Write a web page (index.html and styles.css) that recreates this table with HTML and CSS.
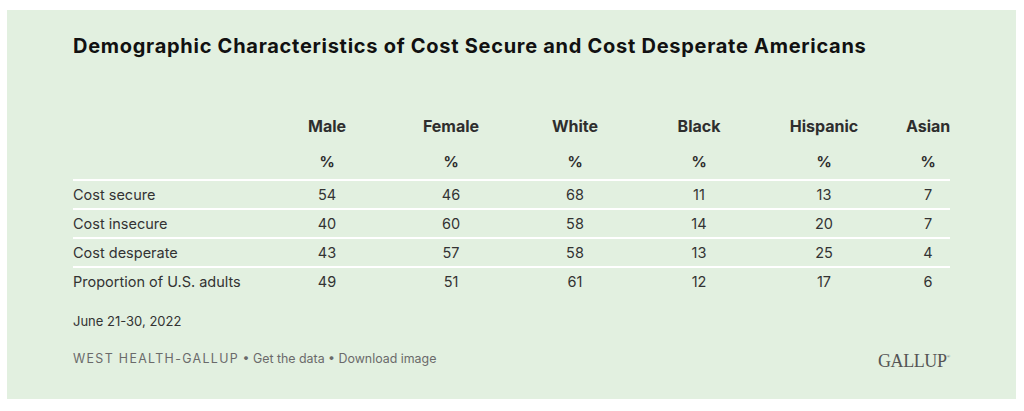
FILE: index.html
```html
<!DOCTYPE html>
<html lang="en">
<head>
<meta charset="utf-8">
<title>Demographic Characteristics of Cost Secure and Cost Desperate Americans</title>
<link rel="stylesheet" href="styles.css">
</head>
<body>
<section class="panel">
  <h1 class="title">Demographic Characteristics of Cost Secure and Cost Desperate Americans</h1>
  <div class="table">
    <div class="row head">
      <div class="cell label"></div>
      <div class="cell">Male</div>
      <div class="cell">Female</div>
      <div class="cell">White</div>
      <div class="cell">Black</div>
      <div class="cell">Hispanic</div>
      <div class="cell last">Asian</div>
    </div>
    <div class="row head units">
      <div class="cell label"></div>
      <div class="cell">%</div>
      <div class="cell">%</div>
      <div class="cell">%</div>
      <div class="cell">%</div>
      <div class="cell">%</div>
      <div class="cell last">%</div>
    </div>
    <div class="row data">
      <div class="cell label">Cost secure</div>
      <div class="cell">54</div><div class="cell">46</div><div class="cell">68</div><div class="cell">11</div><div class="cell">13</div><div class="cell last">7</div>
    </div>
    <div class="row data">
      <div class="cell label">Cost insecure</div>
      <div class="cell">40</div><div class="cell">60</div><div class="cell">58</div><div class="cell">14</div><div class="cell">20</div><div class="cell last">7</div>
    </div>
    <div class="row data">
      <div class="cell label">Cost desperate</div>
      <div class="cell">43</div><div class="cell">57</div><div class="cell">58</div><div class="cell">13</div><div class="cell">25</div><div class="cell last">4</div>
    </div>
    <div class="row data">
      <div class="cell label">Proportion of U.S. adults</div>
      <div class="cell">49</div><div class="cell">51</div><div class="cell">61</div><div class="cell">12</div><div class="cell">17</div><div class="cell last">6</div>
    </div>
  </div>
  <p class="date">June 21-30, 2022</p>
  <div class="footer">
    <p class="source"><span class="org">WEST HEALTH-GALLUP</span> • Get the data • Download image</p>
    <div class="logo">GALLUP<sup>®</sup></div>
  </div>
</section>
</body>
</html>
```
FILE: styles.css
```css
html, body {
  margin: 0;
  padding: 0;
  background: #ffffff;
}
body {
  font-family: Inter, "Noto Sans", "Liberation Sans", sans-serif;
}
.panel {
  box-sizing: border-box;
  margin: 10px 0 0 7px;
  width: 1009px;
  height: 389px;
  background: #e2f0e0;
  padding: 24px 66px 0 66px;
}
.title {
  margin: 0;
  font-size: 20px;
  line-height: 24px;
  font-weight: 700;
  color: #111111;
  letter-spacing: 0.72px;
}
.table {
  margin-top: 54px;
}
.row {
  display: grid;
  grid-template-columns: 192px 124px 124px 124px 124px 126px 63px;
  align-items: center;
}
.cell {
  text-align: center;
  font-size: 14.5px;
  color: #333333;
  line-height: 28px;
}
.cell.label {
  text-align: left;
}
.cell.last {
  padding-left: 19px;
}
.head .cell {
  font-size: 16px;
  font-weight: 700;
  color: #2e2e2e;
}
.head {
  height: 28px;
}
.head.units {
  padding: 8px 0 3px;
  height: 28px;
}
.head.units .cell {
  font-size: 15px;
}
.data {
  border-top: 2px solid #ffffff;
  height: 27px;
}
.data .cell {
  line-height: 27px;
}
.date {
  margin: 18px 0 0;
  font-size: 13px;
  line-height: 16px;
  color: #333333;
}
.footer {
  margin-top: 20px;
  display: flex;
  justify-content: space-between;
  align-items: center;
}
.source {
  margin: 0;
  font-size: 12.4px;
  line-height: 16px;
  color: #6a6a6a;
}
.org {
  letter-spacing: 1.35px;
}
.logo {
  font-family: "Liberation Serif", "DejaVu Serif", serif;
  font-size: 18px;
  line-height: 16px;
  color: #555555;
  letter-spacing: -0.4px;
}
.logo sup {
  font-size: 5px;
  vertical-align: 9px;
}
```
